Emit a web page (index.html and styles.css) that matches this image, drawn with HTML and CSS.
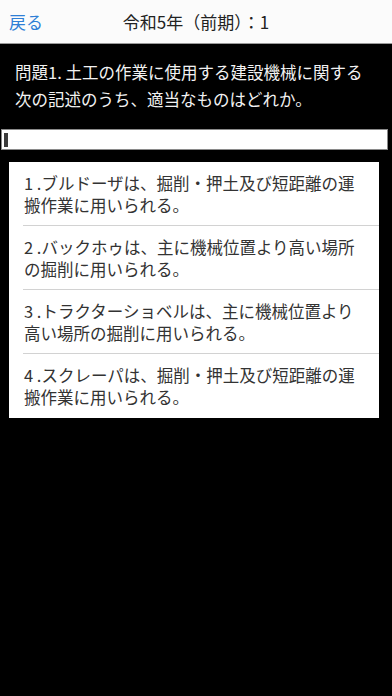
FILE: index.html
```html
<!DOCTYPE html>
<html lang="ja">
<head>
<meta charset="utf-8">
<title>令和5年（前期）：1</title>
<link rel="stylesheet" href="styles.css">
</head>
<body>
<header class="navbar">
  <a class="back">戻る</a>
  <div class="title">令和5年（前期）：1</div>
</header>
<main class="content">
  <p class="question">問題1. 土工の作業に使用する建設機械に関する
次の記述のうち、適当なものはどれか。</p>
  <div class="progress"><span class="cursor"></span></div>
  <ul class="choices">
    <li class="choice">1 .ブルドーザは、掘削・押土及び短距離の運
搬作業に用いられる。</li>
    <li class="choice">2 .バックホゥは、主に機械位置より高い場所
の掘削に用いられる。</li>
    <li class="choice">3 .トラクターショベルは、主に機械位置より
高い場所の掘削に用いられる。</li>
    <li class="choice">4 .スクレーパは、掘削・押土及び短距離の運
搬作業に用いられる。</li>
  </ul>
</main>
</body>
</html>
```

FILE: styles.css
```css
html, body {
  margin: 0;
  padding: 0;
  background: #000;
  font-family: "Noto Sans CJK JP", "Noto Sans", sans-serif;
}

.navbar {
  height: 43px;
  background: #fbfbfb;
  border-bottom: 1px solid #9a9a9a;
  display: flex;
  align-items: center;
  position: relative;
}

.back {
  margin-left: 9px;
  color: #2f7fd6;
  font-size: 17px;
  line-height: 20px;
  z-index: 1;
}

.title {
  position: absolute;
  left: 0;
  right: 0;
  text-align: center;
  font-size: 17px;
  line-height: 20px;
  color: #222;
}

.content {
  display: flex;
  flex-direction: column;
}

.question {
  margin: 15px 0 0 15px;
  color: #f2f2f2;
  font-size: 16.5px;
  line-height: 27px;
  white-space: pre-line;
}

.progress {
  margin: 16px 4px 0 1px;
  height: 19px;
  background: #fff;
  border: 1px solid #8a8a8a;
  display: flex;
  align-items: center;
}

.cursor {
  width: 4px;
  height: 14px;
  margin-left: 2px;
  background: #3c3c3c;
}

.choices {
  list-style: none;
  margin: 12px 13px 0 9px;
  padding: 0;
  background: #fff;
}

.choice {
  margin-left: 14px;
  padding: 11px 0 9px 1px;
  border-bottom: 1px solid #d2d2d2;
  color: #333;
  font-size: 16.5px;
  line-height: 21.5px;
  white-space: pre-line;
}

.choice:last-child {
  border-bottom: none;
  padding-bottom: 10px;
}
```
